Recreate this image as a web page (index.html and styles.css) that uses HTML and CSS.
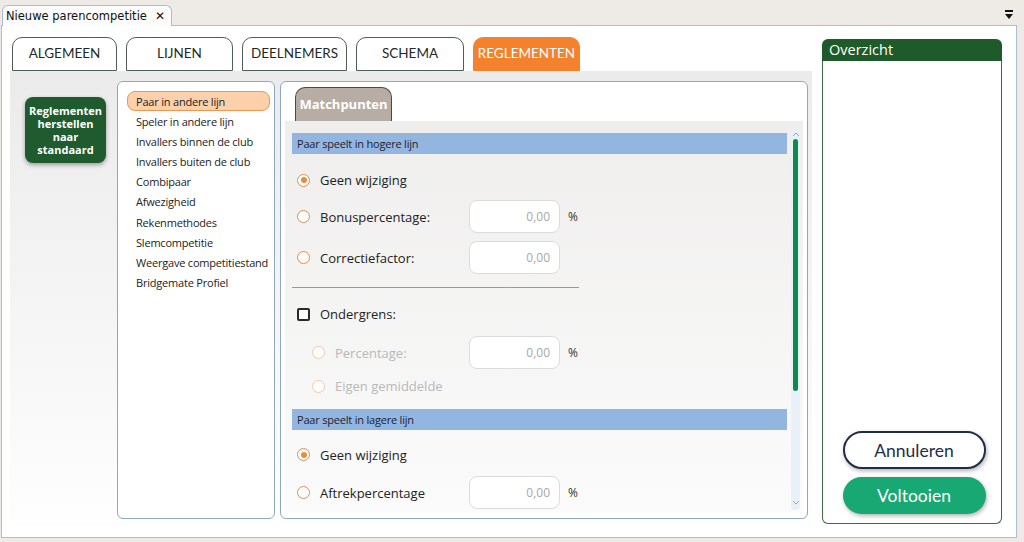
FILE: index.html
```html
<!DOCTYPE html>
<html>
<head>
<meta charset="utf-8">
<link rel="stylesheet" href="styles.css">
</head>
<body>
<div class="topbar">
  <div class="doctab"><span>Nieuwe parencompetitie</span><span class="close">✕</span></div>
  <svg class="menuicon" width="10" height="10" viewBox="0 0 10 10"><rect x="1" y="0" width="8" height="2" fill="#111"/><path d="M1 4 H9 L5 9 Z" fill="#111"/></svg>
</div>
<div class="window">
  <div class="main">
    <div class="tabs">
      <div class="tab">ALGEMEEN</div>
      <div class="tab w2">LIJNEN</div>
      <div class="tab w3">DEELNEMERS</div>
      <div class="tab w4">SCHEMA</div>
      <div class="tab active">REGLEMENTEN</div>
    </div>
    <div class="content">
      <div class="side">
        <div class="resetbtn">Reglementen herstellen naar standaard</div>
      </div>
      <div class="list">
        <div class="item selected">Paar in andere lijn</div>
        <div class="item">Speler in andere lijn</div>
        <div class="item">Invallers binnen de club</div>
        <div class="item">Invallers buiten de club</div>
        <div class="item">Combipaar</div>
        <div class="item">Afwezigheid</div>
        <div class="item">Rekenmethodes</div>
        <div class="item">Slemcompetitie</div>
        <div class="item">Weergave competitiestand</div>
        <div class="item">Bridgemate Profiel</div>
      </div>
      <div class="panel">
        <div class="subtabs"><div class="subtab">Matchpunten</div></div>
        <div class="graybox">
          <div class="scrollarea">
            <div class="header">Paar speelt in hogere lijn</div>
            <div class="row r1"><span class="radio on"></span><span class="label">Geen wijziging</span></div>
            <div class="row r2"><span class="radio"></span><span class="label">Bonuspercentage:</span><div class="input">0,00</div><span class="pct">%</span></div>
            <div class="row r3"><span class="radio"></span><span class="label">Correctiefactor:</span><div class="input">0,00</div></div>
            <div class="sep"></div>
            <div class="row chkrow"><span class="check"></span><span class="label">Ondergrens:</span></div>
            <div class="row r4 indent"><span class="radio dis"></span><span class="label dis">Percentage:</span><div class="input">0,00</div><span class="pct">%</span></div>
            <div class="row r5 indent"><span class="radio dis"></span><span class="label dis">Eigen gemiddelde</span></div>
            <div class="header h2">Paar speelt in lagere lijn</div>
            <div class="row r6"><span class="radio on"></span><span class="label">Geen wijziging</span></div>
            <div class="row r7"><span class="radio"></span><span class="label">Aftrekpercentage</span><div class="input">0,00</div><span class="pct">%</span></div>
          </div>
          <div class="scrollbar">
            <svg class="arr" width="8" height="5" viewBox="0 0 8 5"><path d="M1 4 L4 1 L7 4" fill="none" stroke="#9aa" stroke-width="1"/></svg>
            <div class="thumb"></div>
            <svg class="arr down" width="8" height="5" viewBox="0 0 8 5"><path d="M1 1 L4 4 L7 1" fill="none" stroke="#9aa" stroke-width="1"/></svg>
          </div>
        </div>
      </div>
    </div>
  </div>
  <div class="overview">
    <div class="ovhead">Overzicht</div>
    <div class="ovbody">
      <div class="btn cancel">Annuleren</div>
      <div class="btn done">Voltooien</div>
    </div>
  </div>
</div>
</body>
</html>
```
FILE: styles.css
```css
* { box-sizing: border-box; }
html, body { margin: 0; padding: 0; }
body {
  background: #eeebe7;
  width: 1024px;
  height: 542px;
  overflow: hidden;
  font-family: "Open Sans", sans-serif;
}
.topbar {
  height: 25px;
  display: flex;
  align-items: flex-end;
  justify-content: space-between;
  padding-left: 2px;
  padding-right: 10px;
}
.doctab {
  width: 170px;
  height: 21px;
  border: 1px solid #a9bdd6;
  border-bottom: none;
  border-radius: 6px 6px 0 0;
  background: #fbfbfb;
  font-family: "DejaVu Sans", sans-serif;
  font-size: 11.5px;
  color: #111;
  display: flex;
  align-items: center;
  padding-left: 3px;
  gap: 8px;
  margin-bottom: -1px;
  position: relative;
  z-index: 2;
}
.doctab .close { font-size: 12px; font-weight: bold; }
.menuicon { align-self: flex-start; margin-top: 10px; }
.window {
  margin-left: 1px;
  width: 1016px;
  height: 513px;
  border: 1px solid #a9bdd6;
  background: #fff;
  display: flex;
}
.main {
  margin-left: 8px;
  width: 802px;
  padding-top: 11px;
}
.tabs {
  display: flex;
  gap: 9px;
  padding-left: 2px;
  height: 34px;
}
.tab {
  width: 105px;
  height: 34px;
  border: 1px solid #4f5d55;
  border-radius: 10px 10px 0 0;
  font-family: "Lato", sans-serif;
  font-size: 13.5px;
  color: #1e2a24;
  display: flex;
  align-items: center;
  justify-content: center;
  padding-bottom: 2px;
  background: #fff;
}
.tab.w2 { width: 107px; }
.tab.w3 { width: 105px; }
.tab.w4 { width: 108px; }
.tab.active {
  width: 107px;
  background: #f4822c;
  border-color: #f4822c;
  color: #fff;
}
.content {
  height: 455px;
  background: linear-gradient(#ebebeb, #fefefe);
  display: flex;
  padding-top: 10px;
}
.side {
  width: 107px;
  padding-left: 15px;
  padding-top: 16px;
}
.resetbtn {
  width: 81px;
  height: 66px;
  background: #1f5b2e;
  border-radius: 8px;
  color: #fff;
  font-weight: bold;
  font-size: 11px;
  line-height: 13px;
  text-align: center;
  display: flex;
  align-items: center;
  justify-content: center;
  padding: 0 4px;
  box-shadow: 0 2px 4px rgba(0,0,0,0.35);
}
.list {
  width: 158px;
  height: 438px;
  background: #fff;
  border: 1px solid #8ea7c6;
  border-radius: 6px;
  padding: 9px 4px 0 9px;
}
.item {
  height: 20.2px;
  font-size: 11px;
  color: #222;
  display: flex;
  align-items: center;
  padding-left: 9px;
  font-family: "Open Sans", sans-serif;
  letter-spacing: -0.2px;
}
.item.selected {
  background: #fbd0ab;
  border: 1px solid #f19552;
  border-radius: 8px;
  padding-left: 8px;
  height: 20px;
}
.panel {
  margin-left: 5px;
  width: 528px;
  height: 438px;
  background: #fff;
  border: 1px solid #8ea7c6;
  border-radius: 6px;
  padding: 5px 4px 5px 4px;
  display: flex;
  flex-direction: column;
}
.subtabs { height: 34px; padding-left: 10px; }
.subtab {
  width: 97px;
  height: 34px;
  background: #b7ada4;
  border: 1px solid #4a4a44;
  border-bottom: none;
  border-radius: 10px 10px 0 0;
  color: #fff;
  font-weight: bold;
  font-size: 13px;
  display: flex;
  align-items: center;
  justify-content: center;
  padding-bottom: 2px;
}
.graybox {
  flex: 1;
  background: linear-gradient(#efeeed, #fbfbfb);
  display: flex;
  overflow: hidden;
  padding: 12px 0 0 7px;
}
.scrollarea {
  width: 495px;
  overflow: hidden;
}
.header {
  height: 21px;
  background: #93b6e0;
  font-size: 11px;
  color: #1c2230;
  display: flex;
  align-items: center;
  padding-left: 5px;
  letter-spacing: -0.2px;
}
.row {
  display: flex;
  align-items: center;
  height: 33px;
  padding-left: 5px;
}
.r1 { margin-top: 10px; height: 32px; }
.r2 { margin-top: 4px; }
.r3 { margin-top: 8px; }
.sep {
  margin-top: 13px;
  width: 287px;
  height: 1px;
  background: #9a9a9a;
}
.chkrow { margin-top: 16px; height: 20px; padding-left: 5px; }
.r4 { margin-top: 12px; }
.r5 { margin-top: 7px; height: 20px; }
.h2 { margin-top: 13px; }
.r6 { margin-top: 8px; }
.r7 { margin-top: 5px; }
.radio {
  width: 13px;
  height: 13px;
  border: 1.6px solid #ee8a3f;
  border-radius: 50%;
  flex: none;
  display: flex;
  align-items: center;
  justify-content: center;
  background: #fff;
}
.radio.on::after {
  content: "";
  width: 6px;
  height: 6px;
  border-radius: 50%;
  background: #ee8a3f;
}
.radio.dis { border-color: #f3c9a8; }
.label {
  width: 159px;
  padding-left: 10px;
  font-size: 13px;
  color: #222;
  flex: none;
}
.indent { padding-left: 20px; }
.indent .label { width: 144px; padding-left: 10px; }
.label.dis { color: #b8b8b8; }
.check {
  width: 13px;
  height: 13px;
  border: 2px solid #2a2a2a;
  border-radius: 2px;
  flex: none;
  background: #fff;
}
.chkrow .label { padding-left: 10px; }
.input {
  width: 91px;
  height: 33px;
  border: 1px solid #dcdcdc;
  border-radius: 8px;
  background: #fff;
  font-size: 12px;
  color: #a8a8a8;
  display: flex;
  align-items: center;
  justify-content: flex-end;
  padding-right: 9px;
  flex: none;
}
.pct { margin-left: 8px; font-size: 12px; color: #333; }
.scrollbar {
  width: 9px;
  margin-left: 4px;
  margin-top: -3px;
  height: 380px;
  background: #e9f0f8;
  border-radius: 4px;
  display: flex;
  flex-direction: column;
  align-items: center;
  padding-top: 2px;
}
.arr { flex: none; }
.thumb {
  margin-top: 2px;
  width: 5px;
  height: 252px;
  background: #0e8a4c;
  border-radius: 3px;
}
.arr.down { margin-top: auto; margin-bottom: 5px; }
.overview {
  margin-left: 10px;
  margin-top: 13px;
  width: 180px;
  height: 485px;
  display: flex;
  flex-direction: column;
}
.ovhead {
  height: 22px;
  background: #1e5a2a;
  border-radius: 6px 6px 0 0;
  color: #fff;
  font-size: 14.5px;
  padding-left: 7px;
  line-height: 22px;
}
.ovbody {
  flex: 1;
  border: 1px solid #3f6a48;
  border-top: none;
  border-radius: 0 0 6px 6px;
  display: flex;
  flex-direction: column;
  justify-content: flex-end;
  align-items: center;
  padding-bottom: 9px;
  padding-left: 4px;
  gap: 8px;
}
.btn {
  width: 143px;
  height: 38px;
  border-radius: 19px;
  font-family: "Lato", sans-serif;
  font-size: 17.5px;
  display: flex;
  align-items: center;
  justify-content: center;
  box-shadow: 1px 2px 4px rgba(0,0,0,0.3);
}
.cancel {
  background: #fff;
  border: 2px solid #1d2d4a;
  color: #1d2d4a;
}
.done {
  background: #17a873;
  color: #fff;
  height: 37px;
}
```
